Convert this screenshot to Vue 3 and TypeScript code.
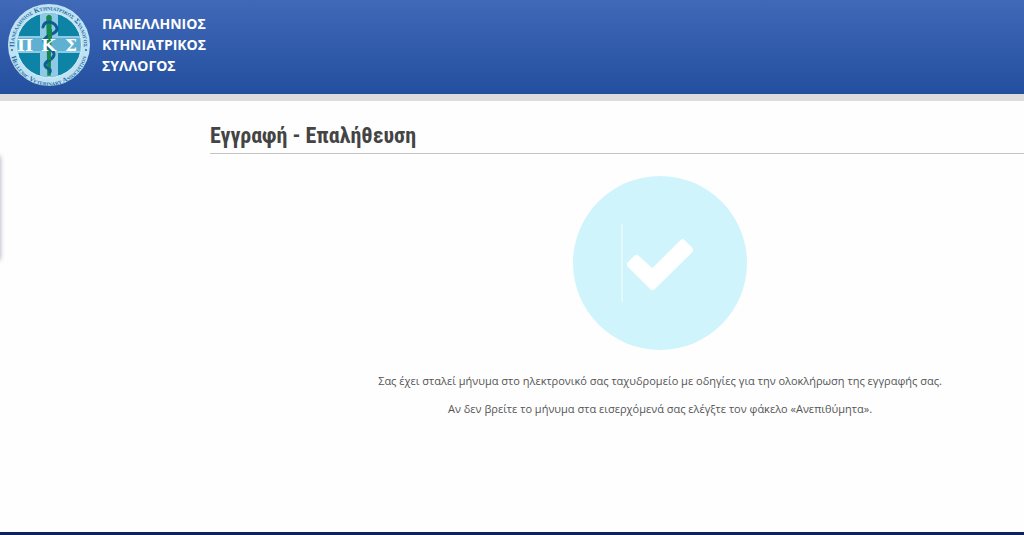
<script setup lang="ts">
const brandLines: string[] = ['ΠΑΝΕΛΛΗΝΙΟΣ', 'ΚΤΗΝΙΑΤΡΙΚΟΣ', 'ΣΥΛΛΟΓΟΣ']
const messages: string[] = [
  'Σας έχει σταλεί μήνυμα στο ηλεκτρονικό σας ταχυδρομείο με οδηγίες για την ολοκλήρωση της εγγραφής σας.',
  'Αν δεν βρείτε το μήνυμα στα εισερχόμενά σας ελέγξτε τον φάκελο «Ανεπιθύμητα».',
]
</script>

<template>
  <div class="page">
    <header class="header">
      <svg class="logo" viewBox="0 0 84 84" role="img" aria-label="Πανελλήνιος Κτηνιατρικός Σύλλογος">
        <defs>
          <path id="ring-top" d="M8.9 52.8A34.8 34.8 0 1 1 75.1 52.8" />
          <path id="ring-bottom" d="M3.2 44A38.8 38.8 0 0 0 80.8 44" />
          <clipPath id="disc"><circle cx="42" cy="42" r="32" /></clipPath>
        </defs>
        <circle cx="42" cy="42" r="41" fill="#bfe3f5" />
        <circle cx="42" cy="42" r="32.5" fill="#0d84a6" />
        <g clip-path="url(#disc)">
          <path d="M33 9h18v66h-18zM9 33h66v17h-66z" fill="#8ecae6" />
          <path d="M9 35h66v13h-66z" fill="#60b0d2" />
        </g>
        <circle cx="42" cy="42" r="32.5" fill="none" stroke="#d9f1fa" stroke-width="1" />
        <path d="M40 14q2-3 4 0l-1 58h-2z" fill="#16884e" stroke="#16884e" stroke-width="1.5" />
        <path
          d="M36 24C38 16 48 19 50 25C51 32 37 31 37 38C37 45 48 45 47 52C46 58 38 57 38 62C38 66 45 65 43 69"
          fill="none" stroke="#0b5f91" stroke-width="3" stroke-linecap="round"
        />
        <path d="M41 26h4v9h-4zM41 49h3v8h-3z" fill="#16884e" />
        <text class="logo-letters" x="10 34 58" y="47.5">ΠΚΣ</text>
        <text class="logo-ring"><textPath href="#ring-top" startOffset="50%" text-anchor="middle">Πανελληνιος Κτηνιατρικος Συλλογος</textPath></text>
        <text class="logo-ring"><textPath href="#ring-bottom" startOffset="50%" text-anchor="middle">Hellenic Veterinary Association</textPath></text>
        <circle cx="5" cy="47" r="1" fill="#236a9e" />
        <circle cx="79" cy="47" r="1" fill="#236a9e" />
      </svg>
      <div class="brand">
        <span v-for="line in brandLines" :key="line">{{ line }}</span>
      </div>
    </header>

    <aside class="drawer-edge" aria-hidden="true"></aside>

    <main class="content">
      <h1 class="title">Εγγραφή - Επαλήθευση</h1>
      <section class="result">
        <svg class="badge" viewBox="13 12 174 174" aria-hidden="true">
          <circle cx="100" cy="99" r="87" fill="#cff4fc" />
          <path d="M62 60V138" stroke="#e9fbff" stroke-width="1.4" />
          <path
            d="M70.5 100.5L76.5 94.5L92.5 109L122.5 79L129.5 86L92.5 122.5Z"
            fill="#fff" stroke="#fff" stroke-width="7" stroke-linejoin="round"
          />
        </svg>
        <p v-for="message in messages" :key="message">{{ message }}</p>
      </section>
    </main>
    <footer class="footer"></footer>
  </div>
</template>

<style>
body {
  margin: 0;
  background: #fefefe;
}
</style>

<style scoped>
.page {
  position: relative;
  display: flex;
  flex-direction: column;
  min-height: 100vh;
  font-family: "Open Sans", "Noto Sans", sans-serif;
  overflow: hidden;
}

.header {
  display: flex;
  align-items: flex-start;
  gap: 11px;
  box-sizing: border-box;
  height: 101px;
  padding: 3px 7px 0;
  border-bottom: 7px solid #dcdcdc;
  background: linear-gradient(#4069b8, #234f9f);
}

.logo {
  flex: none;
  width: 84px;
  height: 84px;
}

.logo-letters {
  fill: #fff;
  font: bold 17px "DejaVu Serif", serif;
}

.logo-ring {
  fill: #236a9e;
  font: bold 7px "Liberation Serif", serif;
  font-variant: small-caps;
}

.brand {
  display: flex;
  flex-direction: column;
  padding-top: 10px;
  color: #fff;
  font-size: 14px;
  font-weight: 700;
  line-height: 21px;
}

.drawer-edge {
  position: absolute;
  top: 156px;
  left: -10px;
  width: 10px;
  height: 104px;
  box-shadow: 0 0 5px #a0a8b8;
}

.content {
  flex: 1;
  padding-left: 210px;
}

.title {
  margin: 0;
  padding: 19px 0 2px;
  border-bottom: 1px solid #c4c4c4;
  color: #444;
  font-family: "Roboto Condensed", "Roboto", sans-serif;
  font-size: 22px;
  font-weight: 700;
  line-height: 31px;
}

.result {
  display: flex;
  flex-direction: column;
  align-items: center;
  padding: 22px 0 24px 86px;
  color: #555;
  font-size: 11px;
  line-height: 18px;
  text-align: center;
}

.badge {
  width: 174px;
  height: 174px;
  margin-bottom: 22px;
}

.result p {
  margin: 0 0 10px;
}

.footer {
  height: 3px;
  background: #0b2359;
}
</style>
